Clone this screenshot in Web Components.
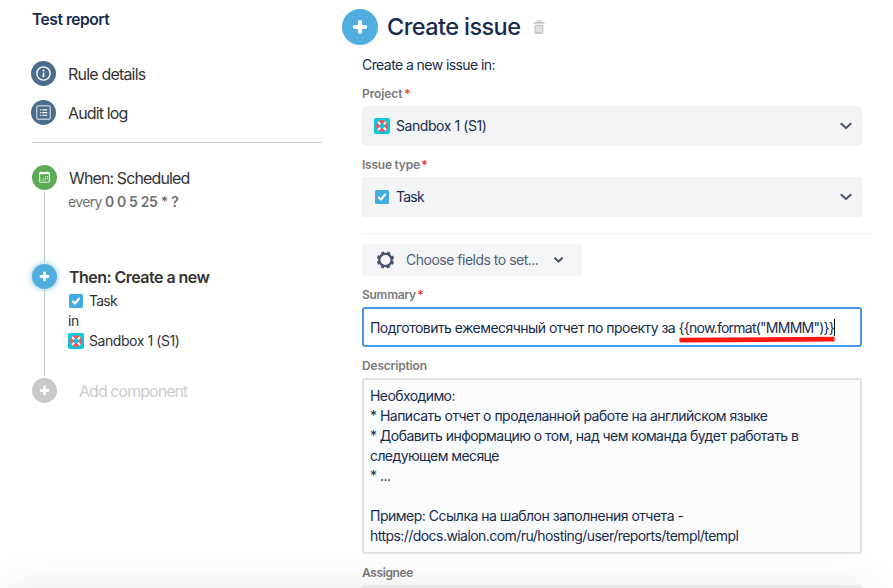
<!DOCTYPE html>
<html lang="ru">
<head>
<meta charset="utf-8">
<title>Create issue</title>
<style>
html,body{margin:0;padding:0;height:100%;overflow:hidden;background:#fff}
body{font-family:Inter,"Liberation Sans",sans-serif}
</style>
</head>
<body>
<rule-editor></rule-editor>
<script>
const define = (name, html, setup) => {
  const t = document.createElement('template');
  t.innerHTML = html;
  customElements.define(name, class extends HTMLElement {
    connectedCallback() {
      if (this.shadowRoot) return;
      this.attachShadow({mode: 'open'}).append(t.content.cloneNode(true));
      if (setup) setup(this, this.shadowRoot);
    }
  });
};

/* One line of text tracked to a given advance width. */
define('tracked-text', `<style>
:host{display:block;white-space:pre;width:max-content}
span{display:inline-block;white-space:pre}
</style><span><slot></slot></span>`, (el, root) => {
  const s = root.querySelector('span');
  const n = el.textContent.length;
  const w = s.getBoundingClientRect().width;
  s.style.letterSpacing = ((+el.getAttribute('w') - .6 - w) / n).toFixed(4) + 'px';
});

const glyphs = {
  plus: '<svg viewBox="0 0 36 36"><path d="M18 12.9v10.2M12.9 18h10.2" stroke="#fff" stroke-width="4" stroke-linecap="round"/></svg>',
  info: '<svg viewBox="0 0 25 25"><circle cx="12.5" cy="12.5" r="6.6" fill="none" stroke="#fff" stroke-width="1.4"/><circle cx="12.5" cy="9.6" r="1" fill="#fff"/><path d="M12.5 11.6v4.7" stroke="#fff" stroke-width="1.7"/></svg>',
  log: '<svg viewBox="0 0 25 25"><rect x="5.7" y="5.7" width="13.6" height="13.6" rx="2" fill="none" stroke="#b9c6d2" stroke-width="1.4"/><path d="M9 9.9h1.2M9 12.6h1.2M9 15.3h1.2M11.2 9.9h5M11.2 12.6h5M11.2 15.3h5" stroke="#fff" stroke-width="1.1"/></svg>',
  calendar: '<svg viewBox="0 0 25 25"><rect x="7.6" y="7.6" width="9.8" height="9.6" rx="1.2" fill="none" stroke="#e9f5e8" stroke-width="1.1"/><path d="M7.6 8.3h9.8" stroke="#fff" stroke-width="1.6"/><path d="M9.7 6.6v1.5M15.3 6.6v1.5" stroke="#fff" stroke-width="1.2"/><path d="M13.3 11.5h1M15 11.5h1M11.4 13.2h1M13.2 13.2h1M15 13.2h1M9.4 15h1M11.3 15h1M13.2 15h1" stroke="#fff" stroke-width="1.1"/></svg>'
};
define('round-icon', `<style>
:host{display:block;flex:none;width:25px;height:25px;border-radius:50%;background:var(--c,#4b6c8b)}
:host([glow]){box-shadow:0 0 6px rgba(80,175,222,.75)}
:host([large]){width:36px;height:36px}
svg{display:block;width:100%;height:100%;fill:none}
</style>`, (el, root) => { root.innerHTML += glyphs[el.getAttribute('glyph')]; });

define('task-icon', `<style>:host{display:block;flex:none;width:14px;height:14px;margin:0 1px}svg{display:block}</style>
<svg width="14" height="14" viewBox="0 0 14 14"><rect width="14" height="14" rx="1.5" fill="#42ade2"/><path d="M3.8 7.4l2.1 2.1 4.3-5" fill="none" stroke="#fff" stroke-width="2.1" stroke-linecap="round" stroke-linejoin="round"/></svg>`);

define('project-icon', `<style>:host{display:block;flex:none;width:16px;height:16px}svg{display:block}</style>
<svg width="16" height="16" viewBox="0 0 16 16"><rect width="16" height="16" rx="2" fill="#05c8e4"/><circle cx="8" cy="8" r="4.3" fill="none" stroke="#ff5155" stroke-width="3.2"/><g stroke="#fff" stroke-width="2"><path d="M4 4l2.2 2.2M12 4L9.8 6.2M4 12l2.2-2.2M12 12L9.8 9.8"/></g></svg>`);

define('chevron-icon', `<style>:host{display:block;flex:none;width:12px;height:8px}svg{display:block;width:100%;height:100%}</style>
<svg viewBox="0 0 12 8"><path d="M1.4 1.7L6 6.1l4.6-4.4" fill="none" stroke="#42526e" stroke-width="var(--s,2)" style="stroke-width:var(--s,2)" stroke-linecap="round" stroke-linejoin="round"/></svg>`);

define('nav-link', `<style>:host{display:flex;align-items:center;gap:12px;height:25px;font-size:16px;line-height:20px;color:#333}
</style><slot name="icon"></slot><div><slot></slot></div>`);

/* A step of the rule: its marker, the connector down to the next one, and its text. */
define('rule-step', `<style>
:host{display:grid;grid-template-columns:25px 1fr;column-gap:12px;box-sizing:border-box;color:#333}
.rail{display:flex;flex-direction:column;align-items:center}
.line{flex:1;width:1px;background:#c4c4c4;margin:1px 0 2px}
:host([last]) .line{display:none}
</style><div class="rail"><slot name="icon"></slot><div class="line"></div></div><div><slot></slot></div>`);

define('rule-sidebar', `<style>
:host{display:block;box-sizing:border-box;width:322px;padding:10px 0 0 32px}
h2{margin:0;font-size:15.6px;line-height:20px;font-weight:600;color:#172b4d}
nav{display:flex;flex-direction:column;gap:14px;margin:31px 0 0 -1px}
hr{margin:17px 0 22px;border:0;height:1px;background:#c8c8c8}
.t{font-size:16px;line-height:20px;padding:3px 0 0 0}
.sub,.row{display:flex;font-size:14px;line-height:20px}
.sub{color:#707070;margin-top:4px;margin-left:-1px}
.row{align-items:center;gap:5px}
.row.p{margin-left:-1px}
b{font-weight:600}
</style>
<h2><tracked-text w="78">Test report</tracked-text></h2>
<nav>
<nav-link><round-icon slot="icon" glyph="info"></round-icon><tracked-text w="78">Rule details</tracked-text></nav-link>
<nav-link><round-icon slot="icon" glyph="log"></round-icon><tracked-text w="60">Audit log</tracked-text></nav-link>
</nav>
<hr>
<rule-step style="height:99px"><round-icon slot="icon" glyph="calendar" style="--c:#5dac55"></round-icon>
<div class="t"><tracked-text w="121">When: Scheduled</tracked-text></div>
<div class="sub"><tracked-text w="37.6">every </tracked-text><b><tracked-text w="74">0 0 5 25 * ?</tracked-text></b></div>
</rule-step>
<rule-step style="height:114px"><round-icon glow slot="icon" glyph="plus" style="--c:#50afde"></round-icon>
<div class="t"><b><tracked-text w="141">Then: Create a new</tracked-text></b></div>
<div class="row p" style="margin-top:4px"><task-icon></task-icon><tracked-text w="28.5">Task</tracked-text></div>
<div class="row p"><tracked-text w="11.5">in</tracked-text></div>
<div class="row p"><project-icon></project-icon><tracked-text w="91">Sandbox 1 (S1)</tracked-text></div>
</rule-step>
<rule-step last><round-icon slot="icon" glyph="plus" style="--c:#c9c9c9"></round-icon>
<div class="t" style="color:#ccc;padding-left:10px"><tracked-text w="109">Add component</tracked-text></div>
</rule-step>`);

define('form-field', `<style>
:host{display:block}
.l{display:flex;gap:1.5px;font-size:12px;line-height:16px;font-weight:600;color:#7a7a7a}
i{font-style:normal;color:#e5412d}
:host(:not([required])) i{display:none}
.c{margin-top:4px}
</style><div class="l"><slot name="label"></slot><i>*</i></div><div class="c"><slot></slot></div>`);

define('select-box', `<style>
:host{display:flex;align-items:center;gap:6px;box-sizing:border-box;width:500px;height:40px;padding:0 10px 0 12px;border-radius:3px;background:#f3f4f6;color:#172b4d;font-size:14px;line-height:20px}
chevron-icon{margin-left:auto}
</style><slot></slot><chevron-icon></chevron-icon>`);

define('fields-button', `<style>
:host{display:flex;align-items:center;box-sizing:border-box;width:220px;height:32px;padding:0 19px 0 14px;border-radius:3px;background:#f4f5f7;color:#505f79;font-size:14px;line-height:20px}
svg{display:block;margin-right:10px}chevron-icon{margin-left:auto;width:9px;height:6px;--s:2.7}
</style><svg width="20" height="20" viewBox="0 0 20 20"><g fill="none" stroke="#42526e"><circle cx="9.5" cy="10" r="6.2" stroke-width="2.3"/><circle cx="9.5" cy="10" r="7.5" stroke-width="2.4" stroke-dasharray="2.9 2.99" stroke-dashoffset="-1.5"/></g></svg><slot></slot><chevron-icon></chevron-icon>`);

define('text-box', `<style>
:host{display:block;position:relative;box-sizing:border-box;width:500px;padding:6px 6px;border:2px solid #dfe1e6;border-radius:3px;background:#fafbfc;color:#172b4d;font-size:14px;line-height:20px}
:host([focused]){background:#fff;border-color:#4798f0;padding:9px 6px 7px}
</style><slot></slot>`);

define('issue-form', `<style>
:host{display:block;width:530px;margin-left:20px;padding-top:9px}
header{display:flex;align-items:center;height:36px}
h1{margin:0 0 0 9px;font-size:23.5px;line-height:28px;font-weight:500;color:#172b4d}
header svg{margin-left:13px;display:block}
.b{padding-left:20px}
.intro{font-size:14px;line-height:20px;color:#172b4d;margin:10px 0 11px}
form-field{margin-bottom:11px}
hr{margin:16px 0 10px;border:0;height:1px;width:509px;background:#eff0f2}
fields-button{margin-bottom:11px}
.row{display:flex}
.mark{position:absolute;left:315px;top:27px}
.caret{width:1px;height:17px;margin-top:1px;background:#111}
.blank{height:20px}
</style>
<header><round-icon large glyph="plus" style="--c:#50afde"></round-icon><h1><tracked-text w="134">Create issue</tracked-text></h1>
<svg width="12" height="14" viewBox="0 0 12 14"><path d="M.5 2h11v1.8H.5z" fill="#c8c8c8"/><path d="M4 2V.8h4V2" fill="none" stroke="#c8c8c8" stroke-width="1.2"/><path d="M1.6 4.8h8.8v7.7a1.4 1.4 0 0 1-1.4 1.4H3a1.4 1.4 0 0 1-1.4-1.4z" fill="#c8c8c8"/><path d="M4 6.3v5.8M6 6.3v5.8M8 6.3v5.8" stroke="#fff" stroke-width=".9"/></svg></header>
<div class="b">
<div class="intro"><tracked-text w="133.6">Create a new issue in:</tracked-text></div>
<form-field required><tracked-text slot="label" w="41">Project</tracked-text><select-box><project-icon></project-icon><tracked-text w="91">Sandbox 1 (S1)</tracked-text></select-box></form-field>
<form-field required><tracked-text slot="label" w="58.4">Issue type</tracked-text><select-box><task-icon></task-icon><tracked-text w="28.5">Task</tracked-text></select-box></form-field>
<hr>
<fields-button><tracked-text w="133">Choose fields to set...</tracked-text></fields-button>
<form-field required><tracked-text slot="label" w="54.4">Summary</tracked-text><text-box focused><div class="row"><tracked-text w="309.2">Подготовить ежемесячный отчет по проекту за </tracked-text><tracked-text w="156">{{now.format("MMMM")}}</tracked-text><div class="caret"></div></div>
<svg class="mark" width="158" height="8" viewBox="0 0 158 8"><path d="M.5 4.2L155.5 3.2" stroke="#fc1b14" stroke-width="4.8"/></svg></text-box></form-field>
<form-field><tracked-text slot="label" w="65.4">Description</tracked-text><text-box>
<tracked-text w="85.5">Необходимо:</tracked-text>
<tracked-text w="398">* Написать отчет о проделанной работе на английском языке</tracked-text>
<tracked-text w="429">* Добавить информацию о том, над чем команда будет работать в</tracked-text>
<tracked-text w="129.5">следующем месяце</tracked-text>
<tracked-text w="21">* ...</tracked-text>
<div class="blank"></div>
<tracked-text w="314">Пример: Ссылка на шаблон заполнения отчета -</tracked-text>
<tracked-text w="369">https://docs.wialon.com/ru/hosting/user/reports/templ/templ</tracked-text>
</text-box></form-field>
<form-field><tracked-text slot="label" w="51.5">Assignee</tracked-text><select-box></select-box></form-field>
</div>`);

define('rule-editor', `<style>
:host{display:flex;position:relative;height:588px;overflow:hidden;background:#fff}
.shade{position:absolute;left:10px;right:24px;top:594px;height:60px;box-shadow:0 0 44px rgba(0,0,0,.13);pointer-events:none}
</style><rule-sidebar></rule-sidebar><issue-form></issue-form><div class="shade"></div>`);
</script>
</body>
</html>
